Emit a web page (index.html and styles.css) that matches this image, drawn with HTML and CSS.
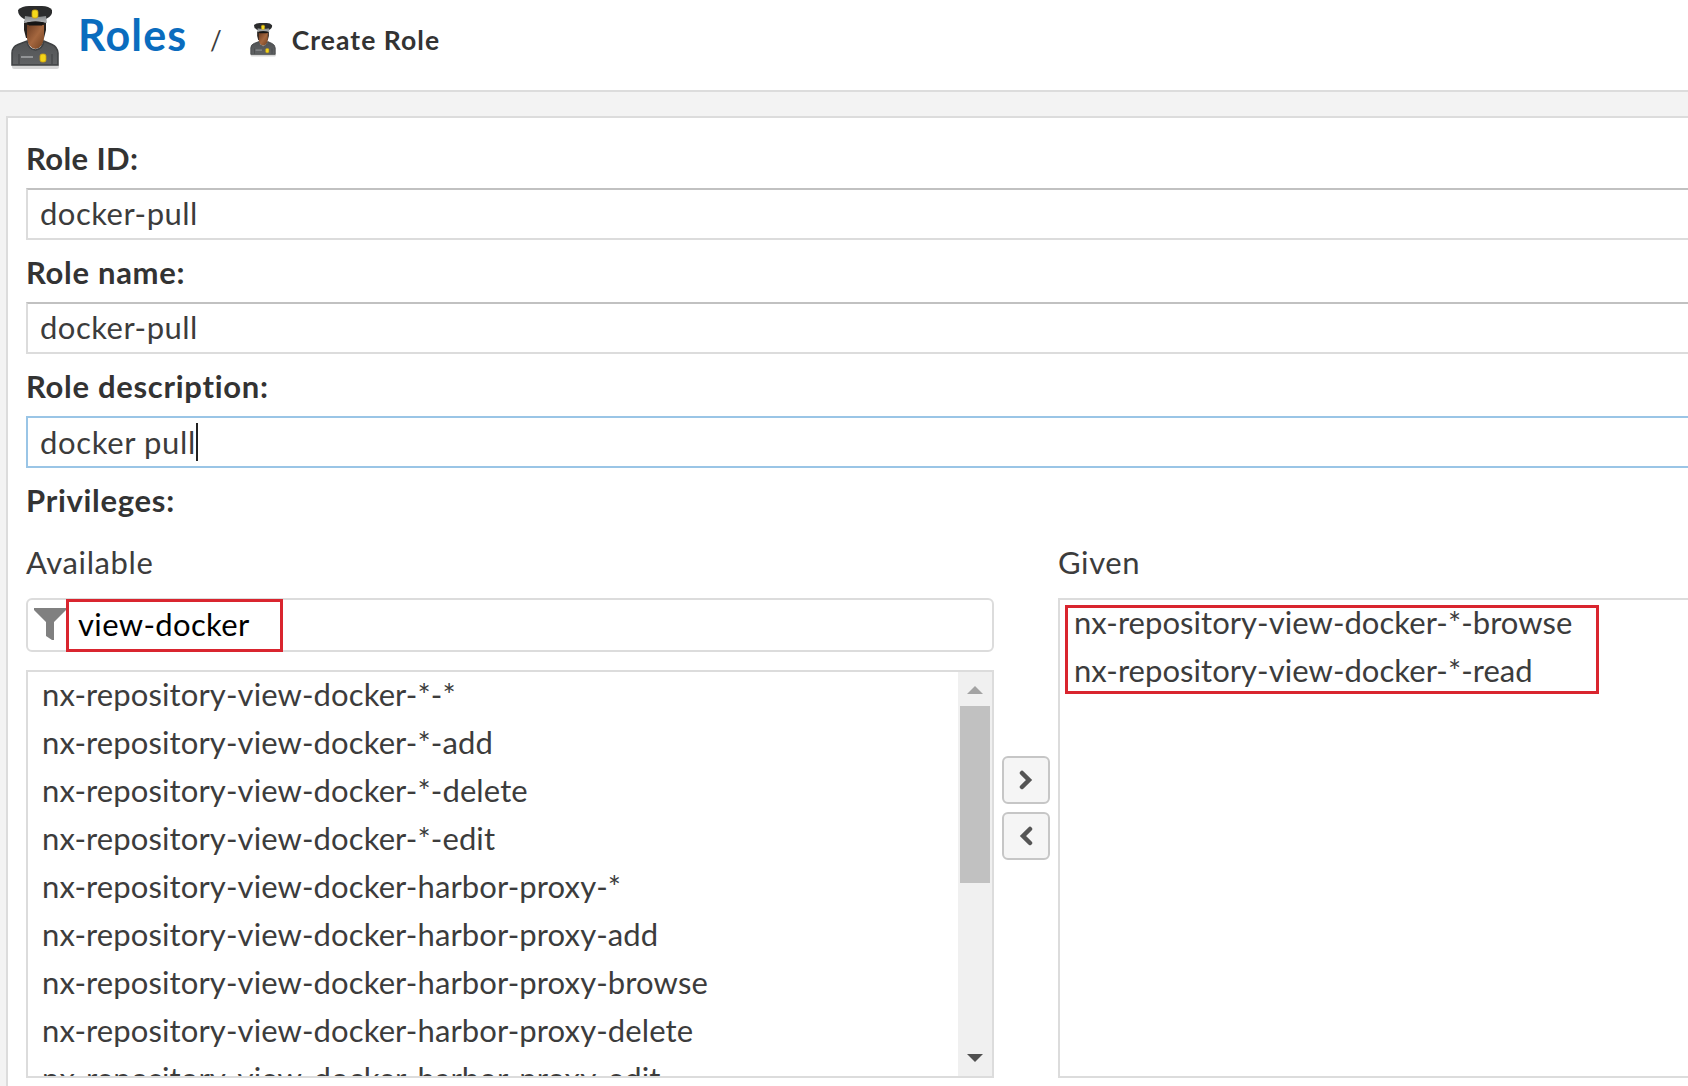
FILE: index.html
```
<!DOCTYPE html>
<html lang="en">
<head>
<meta charset="UTF-8" />
<meta name="viewport" content="width=device-width, initial-scale=1" />
<title>Roles / Create Role</title>
<link rel="stylesheet" href="styles.css">
</head>
<body>
<svg class="defs" width="0" height="0">
  <defs>
    <linearGradient id="skin" x1="0" x2="1" y1="0" y2="1">
      <stop offset="0" stop-color="#6b3c22" />
      <stop offset="0.5" stop-color="#a5673f" />
      <stop offset="1" stop-color="#70401f" />
    </linearGradient>
    <linearGradient id="coat" x1="0" x2="0" y1="0" y2="1">
      <stop offset="0" stop-color="#505254" />
      <stop offset="1" stop-color="#616365" />
    </linearGradient>
    <linearGradient id="band" x1="0" x2="0" y1="0" y2="1">
      <stop offset="0" stop-color="#85888a" />
      <stop offset="1" stop-color="#b4b6b8" />
    </linearGradient>
    <symbol id="officer" viewBox="0 0 52 64">
      <rect x="3" y="58" width="47" height="5" rx="2" fill="#d6d6d6" />
      <path d="M15 15h22v9l-2 8H17l-2-8z" fill="#26211e" />
      <path d="M19 34h15l2 7-9 9-10-9z" fill="#f4f4f4" />
      <path d="M18 19h17v13q0 9-8.500 11Q18 41 18 32z" fill="url(#skin)" />
      <path d="M3 59V47q0-6 6-8.500L18 35q1 8 8.500 9 7-1 8.500-9l8 3.500q5.500 2.500 6 8.500v12z" fill="url(#coat)" stroke="#3f4143" stroke-width="1.500" />
      <path d="M10 48v10M43 48v10" stroke="#3f4143" stroke-width="1" />
      <path d="M12 51h12" stroke="#a5a7a8" stroke-width="1.500" />
      <rect x="31" y="48" width="6" height="8" rx="2" fill="#f3d418" stroke="#c99d10" stroke-width="0.800" />
      <path d="M9 4Q13 0 20 0h13q7 0 10 4 1 6-6 9H15q-6-3-6-9z" fill="#2b2c2d" />
      <path d="M16 10q10 2 21 0l1 7q-12-3-23 0z" fill="url(#band)" />
      <path d="M18 16.500q9-2 17 0l-2 3H20z" fill="#151515" />
      <rect x="23" y="4" width="6" height="8" rx="2" fill="#f5d91c" stroke="#c99d10" stroke-width="0.800" />
    </symbol>
  </defs>
</svg>

<header class="header">
  <svg class="icon-large"><use href="#officer" /></svg>
  <a class="crumb-root">Roles</a>
  <span class="crumb-sep">/</span>
  <svg class="icon-small"><use href="#officer" /></svg>
  <span class="crumb-current">Create Role</span>
</header>

<main class="content">
  <form class="panel">
    <label class="label">Role ID:</label>
    <div class="field">docker-pull</div>

    <label class="label">Role name:</label>
    <div class="field">docker-pull</div>

    <label class="label">Role description:</label>
    <div class="field focused">docker pull<span class="caret"></span></div>

    <label class="label">Privileges:</label>
    <div class="picker">
      <div class="available">
        <div class="column-title">Available</div>
        <div class="filter">
          <svg class="funnel" width="32" height="32" viewBox="0 0 32 32"><path d="M0 0h32v2L20 14v18h-2l-6-4V14L0 2z" fill="#808080" /></svg>
          <span class="filter-text">view-docker</span>
          <div class="mark mark-filter"></div>
        </div>
        <div class="list list-available">
          <ul>
            <li>nx-repository-view-docker-*-*</li>
            <li>nx-repository-view-docker-*-add</li>
            <li>nx-repository-view-docker-*-delete</li>
            <li>nx-repository-view-docker-*-edit</li>
            <li>nx-repository-view-docker-harbor-proxy-*</li>
            <li>nx-repository-view-docker-harbor-proxy-add</li>
            <li>nx-repository-view-docker-harbor-proxy-browse</li>
            <li>nx-repository-view-docker-harbor-proxy-delete</li>
            <li>nx-repository-view-docker-harbor-proxy-edit</li>
          </ul>
          <div class="scrollbar">
            <svg width="16" height="8" viewBox="0 0 16 8"><path d="M8 0l8 8H0z" fill="#a3a3a3" /></svg>
            <div class="thumb"></div>
            <svg class="arrow-down" width="16" height="8" viewBox="0 0 16 8"><path d="M0 0h16L8 8z" fill="#505050" /></svg>
          </div>
        </div>
      </div>

      <div class="buttons">
        <button type="button" class="move"><svg width="14" height="20" viewBox="0 0 14 20"><path d="M3 3l7 7-7 7" /></svg></button>
        <button type="button" class="move"><svg width="14" height="20" viewBox="0 0 14 20"><path d="M11 3l-7 7 7 7" /></svg></button>
      </div>

      <div class="given">
        <div class="column-title">Given</div>
        <div class="list list-given">
          <ul>
            <li>nx-repository-view-docker-*-browse</li>
            <li>nx-repository-view-docker-*-read</li>
          </ul>
          <div class="mark mark-given"></div>
        </div>
      </div>
    </div>
  </form>
</main>
</body>
</html>
```
FILE: styles.css
```
* {
  box-sizing: border-box;
}
body {
  margin: 0;
  height: 1086px;
  overflow: hidden;
  display: flex;
  flex-direction: column;
  background: #f3f3f3;
  font-family: Lato, "Open Sans", sans-serif;
  font-size: 31px;
  color: #3c3c3c;
  white-space: nowrap;
}
.defs {
  position: absolute;
}
.header {
  height: 92px;
  flex: none;
  display: flex;
  align-items: flex-start;
  padding-left: 9px;
  background: #fff;
  border-bottom: 2px solid #dcdcdc;
}
.icon-large {
  width: 52px;
  height: 64px;
  margin-top: 6px;
}
.icon-small {
  width: 28px;
  height: 34px;
  margin: 23px 0 0 27px;
}
.crumb-root {
  width: 109px;
  margin: 10px 0 0 17px;
  font-size: 43px;
  line-height: 50px;
  font-weight: 700;
  letter-spacing: 1.200px;
  color: #0a6cbe;
}
.crumb-sep {
  margin: 23px 0 0 23px;
  font-size: 26px;
  line-height: 34px;
}
.crumb-current {
  margin: 23px 0 0 15px;
  font-size: 26.500px;
  line-height: 34px;
  font-weight: 700;
  letter-spacing: 1.050px;
  color: #333;
}
.content {
  flex: 1;
  min-height: 0;
  padding: 24px 0 0 6px;
}
.panel {
  height: 100%;
  padding: 20px 0 0 18px;
  background: #fff;
  border: 2px solid #dcdcdc;
  border-width: 2px 0 0 2px;
}
.label {
  display: block;
  margin: 12px 0 10px;
  line-height: 40px;
  font-weight: 700;
  letter-spacing: 0.700px;
  color: #333;
}
.label:first-child {
  margin-top: 0;
  letter-spacing: 0.400px;
}
.field {
  height: 52px;
  padding-left: 12px;
  border: 2px solid #dcdcdc;
  border-top-color: #c1c1c1;
  border-right: 0;
  line-height: 46px;
  letter-spacing: 0.500px;
}
.focused {
  border-color: #9ac5e6;
  display: flex;
  align-items: center;
  letter-spacing: 0.650px;
}
.caret {
  width: 2px;
  height: 38px;
  background: #222;
}
.picker {
  display: flex;
  margin-top: 22px;
}
.available {
  width: 968px;
}
.column-title {
  height: 40px;
  margin-bottom: 16px;
  line-height: 40px;
  letter-spacing: 0.600px;
}
.filter {
  position: relative;
  display: flex;
  height: 54px;
  margin-bottom: 18px;
  padding-left: 6px;
  border: 2px solid #dcdcdc;
  border-radius: 6px;
}
.funnel {
  margin-top: 8px;
}
.filter-text {
  margin-left: 12px;
  line-height: 48px;
  letter-spacing: 0.350px;
  color: #000;
}
.mark {
  position: absolute;
  border: 3px solid #d9252f;
}
.mark-filter {
  left: 38px;
  top: -1px;
  width: 217px;
  height: 53px;
}
.list {
  position: relative;
  display: flex;
  justify-content: space-between;
  overflow: hidden;
  border: 2px solid #dcdcdc;
}
.list ul {
  margin: 0;
  padding: 0 0 0 14px;
  list-style: none;
}
.list li {
  height: 48px;
  line-height: 44px;
  letter-spacing: 0.050px;
}
.list-available {
  height: 408px;
}
.list-available li {
  letter-spacing: 0.110px;
}
.list-given {
  height: 480px;
  border-right: 0;
}
.scrollbar {
  width: 34px;
  display: flex;
  flex-direction: column;
  align-items: center;
  padding: 14px 0;
  background: #f0f0f0;
}
.thumb {
  width: 30px;
  height: 177px;
  margin-top: 12px;
  background: #c1c1c1;
}
.arrow-down {
  margin-top: auto;
}
.buttons {
  display: flex;
  flex-direction: column;
  gap: 8px;
  margin: 214px 8px 0;
}
.move {
  display: flex;
  align-items: center;
  justify-content: center;
  width: 48px;
  height: 48px;
  padding: 0;
  background: #f5f5f5;
  border: 2px solid #c6c6c6;
  border-radius: 6px;
}
.move path {
  fill: none;
  stroke: #555;
  stroke-width: 4.500;
  stroke-linecap: round;
}
.given {
  flex: 1;
}
.mark-given {
  left: 5px;
  top: 5px;
  width: 534px;
  height: 89px;
}
```
